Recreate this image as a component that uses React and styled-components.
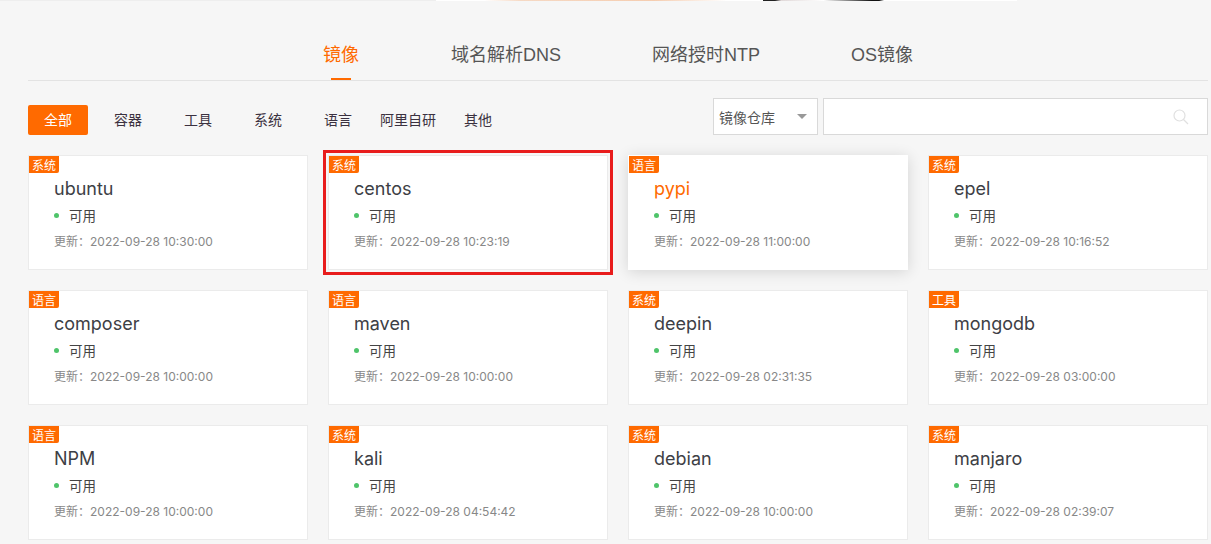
import React from 'react'
import styled, { createGlobalStyle } from 'styled-components'

const orange = '#ff6a00'
const latin = '"Inter", "Noto Sans CJK SC", sans-serif'

const GlobalStyle = createGlobalStyle`
  html, body {
    margin: 0;
    padding: 0;
    background: #f6f6f6;
  }
  body {
    font-family: "Noto Sans CJK SC", sans-serif;
    height: 544px;
    overflow: hidden;
  }
  * { box-sizing: border-box; }
`

const TopStrip = styled.div`
  height: 1px;
  background: linear-gradient(90deg, #eee 0, #eee 36%, #fff 36%, #fff 40%, #f6d9c4 43%, #f5cdb0 54%, #fff 60%, #fff 63%, #222 63%, #222 64%, #e0d8d8 64.5%, #fff 68%, #111 72%, #111 72.6%, #fff 73%, #fff 84%, #f6f6f6 84%);
`

const Page = styled.div`
  padding: 0 0 0 28px;
  width: 1211px;
`

const Tabs = styled.div`
  display: flex;
  height: 80px;
  width: 1180px;
  padding-left: 295px;
  border-bottom: 1px solid #e3e3e3;
`

const Tab = styled.div`
  position: relative;
  font-family: "Liberation Sans", "Noto Sans CJK SC", sans-serif;
  font-size: 18px;
  line-height: 24px;
  margin-top: 42px;
  width: ${p => p.$w}px;
  color: ${p => (p.$active ? orange : '#555')};
  white-space: nowrap;
  &::after {
    content: '';
    display: ${p => (p.$active ? 'block' : 'none')};
    position: absolute;
    left: 8px;
    top: 35px;
    width: 20px;
    height: 2px;
    background: ${orange};
  }
`

const FilterBar = styled.div`
  display: flex;
  align-items: flex-end;
  justify-content: space-between;
  width: 1180px;
  margin-top: 17px;
  height: 37px;
`

const Filters = styled.div`
  display: flex;
  gap: 10px;
`

const Filter = styled.div`
  width: 60px;
  height: 30px;
  line-height: 28px;
  text-align: center;
  font-size: 14px;
  white-space: nowrap;
  border-radius: 2px;
  color: ${p => (p.$active ? '#fff' : '#3b3140')};
  background: ${p => (p.$active ? orange : 'transparent')};
`

const Search = styled.div`
  display: flex;
  gap: 5px;
`

const Select = styled.div`
  width: 105px;
  height: 37px;
  display: flex;
  align-items: center;
  justify-content: space-between;
  padding: 0 10px 0 5px;
  background: #fff;
  border: 1px solid #d9d9d9;
  font-size: 14px;
  color: #555;
`

const Caret = styled.span`
  width: 0;
  height: 0;
  border-left: 5px solid transparent;
  border-right: 5px solid transparent;
  border-top: 5px solid #999;
`

const SearchBox = styled.div`
  width: 385px;
  height: 37px;
  display: flex;
  align-items: center;
  justify-content: flex-end;
  padding-right: 18px;
  background: #fff;
  border: 1px solid #d9d9d9;
  color: #e0e0e0;
`

const Grid = styled.div`
  display: grid;
  grid-template-columns: repeat(4, 280px);
  grid-auto-rows: 115px;
  gap: 20px;
  margin-top: 20px;
`

const Card = styled.div`
  position: relative;
  background: #fff;
  padding: 22px 0 0 25px;
  border: 1px solid ${p => (p.$hover ? '#fff' : '#ebebeb')};
  box-shadow: ${p => (p.$hover ? '0 2px 14px rgba(0,0,0,0.14)' : 'none')};
  outline: ${p => (p.$marked ? '3px solid #e81c1c' : 'none')};
  outline-offset: 2px;
`

const Tag = styled.span`
  position: absolute;
  left: 0;
  top: 0;
  width: 30px;
  height: 17px;
  line-height: 17px;
  text-align: center;
  font-size: 12px;
  color: #fff;
  background: ${orange};
  border-bottom-right-radius: 2px;
`

const Name = styled.div`
  font-family: ${latin};
  font-size: 18px;
  line-height: 22px;
  color: ${p => (p.$hover ? orange : '#3d4045')};
`

const Status = styled.div`
  display: flex;
  align-items: center;
  margin-top: 5px;
  height: 20px;
  font-size: 13.5px;
  color: #444;
`

const Dot = styled.span`
  width: 5px;
  height: 5px;
  border-radius: 50%;
  background: #4fc46a;
  margin-right: 10px;
`

const Updated = styled.div`
  font-family: ${latin};
  margin-top: 8px;
  font-size: 12px;
  line-height: 18px;
  color: #888;
`

const tabs = [
  { label: '镜像', w: 128, active: true },
  { label: '域名解析DNS', w: 201 },
  { label: '网络授时NTP', w: 199 },
  { label: 'OS镜像', w: 100 },
]

const filters = ['全部', '容器', '工具', '系统', '语言', '阿里自研', '其他']

const mirrors = [
  { tag: '系统', name: 'ubuntu', time: '2022-09-28 10:30:00' },
  { tag: '系统', name: 'centos', time: '2022-09-28 10:23:19', marked: true },
  { tag: '语言', name: 'pypi', time: '2022-09-28 11:00:00', hover: true },
  { tag: '系统', name: 'epel', time: '2022-09-28 10:16:52' },
  { tag: '语言', name: 'composer', time: '2022-09-28 10:00:00' },
  { tag: '语言', name: 'maven', time: '2022-09-28 10:00:00' },
  { tag: '系统', name: 'deepin', time: '2022-09-28 02:31:35' },
  { tag: '工具', name: 'mongodb', time: '2022-09-28 03:00:00' },
  { tag: '语言', name: 'NPM', time: '2022-09-28 10:00:00' },
  { tag: '系统', name: 'kali', time: '2022-09-28 04:54:42' },
  { tag: '系统', name: 'debian', time: '2022-09-28 10:00:00' },
  { tag: '系统', name: 'manjaro', time: '2022-09-28 02:39:07' },
]

export default function App() {
  return (
    <>
      <GlobalStyle />
      <TopStrip />
      <Page>
        <Tabs>
          {tabs.map(t => (
            <Tab key={t.label} $w={t.w} $active={t.active}>{t.label}</Tab>
          ))}
        </Tabs>
        <FilterBar>
          <Filters>
            {filters.map((f, i) => (
              <Filter key={f} $active={i === 0}>{f}</Filter>
            ))}
          </Filters>
          <Search>
            <Select>镜像仓库<Caret /></Select>
            <SearchBox>
              <svg width="16" height="16" viewBox="0 0 16 16" fill="none" stroke="currentColor" strokeWidth="1.2">
                <circle cx="6.5" cy="6.5" r="5.5" />
                <path d="M10.5 10.5L15 15" />
              </svg>
            </SearchBox>
          </Search>
        </FilterBar>
        <Grid>
          {mirrors.map(m => (
            <Card key={m.name} $marked={m.marked} $hover={m.hover}>
              <Tag>{m.tag}</Tag>
              <Name $hover={m.hover}>{m.name}</Name>
              <Status><Dot />可用</Status>
              <Updated>更新：{m.time}</Updated>
            </Card>
          ))}
        </Grid>
      </Page>
    </>
  )
}
